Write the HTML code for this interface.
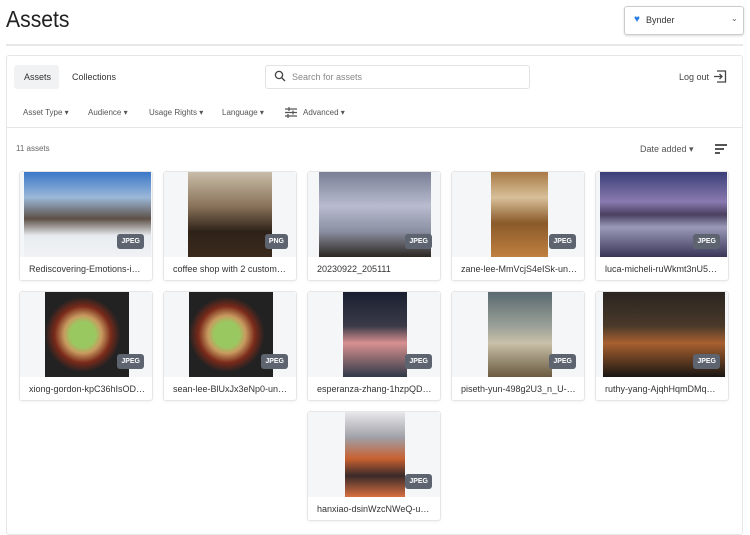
<!DOCTYPE html><html><head><style>
*{box-sizing:border-box;margin:0;padding:0}
body{width:750px;height:527px;background:#fff;font-family:"Liberation Sans",sans-serif;position:relative;overflow:hidden;color:#333}
.a{position:absolute;white-space:nowrap}
.t{font-size:9px;color:#555}
.card{position:absolute;width:134px;height:110px;border:1px solid #e6e6e6;border-radius:3px;background:#fff;box-shadow:0 1px 2px rgba(0,0,0,.05)}
.img{position:absolute;left:0;top:0;width:132px;height:85px;background:#f5f6f7;overflow:hidden}
.pic{position:absolute;top:0;height:85px}
.badge{position:absolute;right:8px;top:62px;background:#5d6470;color:#fff;font-size:7px;font-weight:bold;padding:4px 4px;border-radius:3px}
.lbl{position:absolute;left:9px;top:92px;font-size:9px;color:#333;white-space:nowrap}
</style></head><body>
<div class="a" style="left:6px;top:6px;font-size:23px;color:#222;transform:scaleX(.92);transform-origin:left">Assets</div>
<div class="a" style="left:624px;top:6px;width:120px;height:29px;border:1px solid #ccc;border-radius:3px;box-shadow:0 1px 2px rgba(0,0,0,.15)">
<span class="a" style="left:9px;top:7px;color:#2a7de1;font-size:10px">♥</span><span class="a" style="left:21px;top:8px;font-size:9px">Bynder</span><span class="a" style="left:106px;top:7px;font-size:8px;color:#555">⌄</span></div>
<div class="a" style="left:6px;top:44px;width:737px;height:2px;background:#e8e8e8"></div>
<div class="a" style="left:6px;top:55px;width:737px;height:480px;border:1px solid #e6e6e6;border-radius:3px"></div>
<div class="a" style="left:14px;top:65px;width:45px;height:24px;background:#f1f2f3;border-radius:3px"></div>
<div class="a t" style="left:24px;top:72px;color:#333">Assets</div>
<div class="a t" style="left:72px;top:72px;color:#333">Collections</div>
<div class="a" style="left:265px;top:65px;width:265px;height:24px;border:1px solid #e2e2e2;border-radius:3px"></div>
<svg class="a" style="left:274px;top:70px" width="12" height="12" viewBox="0 0 12 12"><circle cx="5" cy="5" r="3.6" fill="none" stroke="#444" stroke-width="1.3"/><path d="M7.6 7.6L11 11" stroke="#444" stroke-width="1.4"/></svg>
<div class="a t" style="left:292px;top:72px;color:#888">Search for assets</div>
<div class="a t" style="left:679px;top:72px;color:#444">Log out</div>
<svg class="a" style="left:713px;top:70px" width="14" height="13" viewBox="0 0 14 13"><path d="M4 1H12.5V12H4" fill="none" stroke="#444" stroke-width="1.3"/><path d="M1 6.5H9M6.5 4L9 6.5 6.5 9" fill="none" stroke="#444" stroke-width="1.3"/></svg>
<div class="a" style="left:23px;top:108px;font-size:8px;color:#555">Asset Type ▾</div>
<div class="a" style="left:88px;top:108px;font-size:8px;color:#555">Audience ▾</div>
<div class="a" style="left:149px;top:108px;font-size:8px;color:#555">Usage Rights ▾</div>
<div class="a" style="left:222px;top:108px;font-size:8px;color:#555">Language ▾</div>
<svg class="a" style="left:285px;top:107px" width="12" height="11" viewBox="0 0 12 11"><path d="M0 2H12M0 5.5H12M0 9H12M4 0V4M8 3.5V7.5M3 7V11" stroke="#555" stroke-width="1.2"/></svg>
<div class="a" style="left:303px;top:108px;font-size:8px;color:#555">Advanced ▾</div>
<div class="a" style="left:7px;top:127px;width:735px;height:1px;background:#e6e6e6"></div>
<div class="a" style="left:16px;top:144px;font-size:8px;color:#666">11 assets</div>
<div class="a" style="left:640px;top:144px;font-size:9px;color:#555">Date added ▾</div>
<div class="a" style="left:715px;top:144px;width:12px;height:1.5px;background:#555"></div>
<div class="a" style="left:715px;top:148px;width:9px;height:1.5px;background:#555"></div>
<div class="a" style="left:715px;top:152px;width:5px;height:1.5px;background:#555"></div>

<div class="card" style="left:19px;top:171px"><div class="img"><div class="pic" style="left:4px;width:127px;background:linear-gradient(180deg,#3a78c8 0%,#9bb8d8 30%,#5d5048 55%,#e8ecf0 75%,#f0f2f5 100%)"></div></div><div class="badge">JPEG</div><div class="lbl">Rediscovering-Emotions-i…</div></div>
<div class="card" style="left:163px;top:171px"><div class="img"><div class="pic" style="left:24px;width:84px;background:linear-gradient(180deg,#c9bca8 0%,#8a735a 40%,#2e2218 70%,#3a2a1c 100%)"></div></div><div class="badge">PNG</div><div class="lbl">coffee shop with 2 custom…</div></div>
<div class="card" style="left:307px;top:171px"><div class="img"><div class="pic" style="left:11px;width:112px;background:linear-gradient(180deg,#7a7f96 0%,#b9bccf 40%,#8b8fa2 70%,#2b2620 100%)"></div></div><div class="badge">JPEG</div><div class="lbl">20230922_205111</div></div>
<div class="card" style="left:451px;top:171px"><div class="img"><div class="pic" style="left:39px;width:57px;background:linear-gradient(180deg,#a87a45 0%,#d8c09a 30%,#8a5a2a 60%,#c08040 100%)"></div></div><div class="badge">JPEG</div><div class="lbl">zane-lee-MmVcjS4eISk-un…</div></div>
<div class="card" style="left:595px;top:171px"><div class="img"><div class="pic" style="left:4px;width:127px;background:linear-gradient(180deg,#3a3f78 0%,#8a7ab0 35%,#4a4060 50%,#9a9ab8 65%,#3a3658 100%)"></div></div><div class="badge">JPEG</div><div class="lbl">luca-micheli-ruWkmt3nU5…</div></div>

<div class="card" style="left:19px;top:291px"><div class="img"><div class="pic" style="left:25px;width:84px;background:radial-gradient(circle at 45% 50%,#9ac860 0 20%,#c89a60 30%,#7a2a1a 45%,#222 60%)"></div></div><div class="badge">JPEG</div><div class="lbl">xiong-gordon-kpC36hIsOD…</div></div>
<div class="card" style="left:163px;top:291px"><div class="img"><div class="pic" style="left:25px;width:84px;background:radial-gradient(circle at 45% 50%,#9ac860 0 20%,#c89a60 30%,#7a2a1a 45%,#222 60%)"></div></div><div class="badge">JPEG</div><div class="lbl">sean-lee-BlUxJx3eNp0-un…</div></div>
<div class="card" style="left:307px;top:291px"><div class="img"><div class="pic" style="left:35px;width:64px;background:linear-gradient(180deg,#1a2030 0%,#3a3a48 40%,#d89090 60%,#303a48 100%)"></div></div><div class="badge">JPEG</div><div class="lbl">esperanza-zhang-1hzpQD…</div></div>
<div class="card" style="left:451px;top:291px"><div class="img"><div class="pic" style="left:36px;width:64px;background:linear-gradient(180deg,#5a6a70 0%,#9aa098 40%,#c8c0a8 60%,#6a5a40 100%)"></div></div><div class="badge">JPEG</div><div class="lbl">piseth-yun-498g2U3_n_U-…</div></div>
<div class="card" style="left:595px;top:291px"><div class="img"><div class="pic" style="left:7px;width:122px;background:linear-gradient(180deg,#2a2420 0%,#4a3a2a 40%,#a86030 60%,#1a1612 100%)"></div></div><div class="badge">JPEG</div><div class="lbl">ruthy-yang-AjqhHqmDMq…</div></div>

<div class="card" style="left:307px;top:411px"><div class="img"><div class="pic" style="left:37px;width:60px;background:linear-gradient(180deg,#e8e8ea 0%,#a0a0a8 30%,#c86030 55%,#3a2a2a 75%,#d87040 100%)"></div></div><div class="badge">JPEG</div><div class="lbl">hanxiao-dsinWzcNWeQ-u…</div></div>
</body></html>
